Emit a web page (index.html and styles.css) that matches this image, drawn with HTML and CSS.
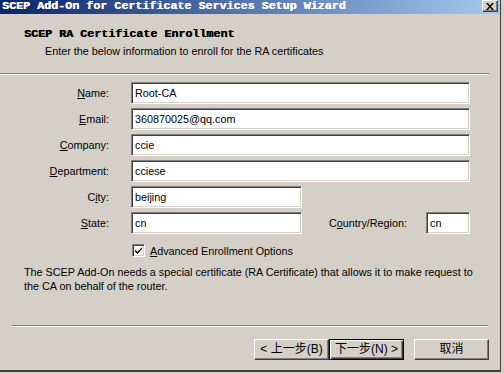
FILE: index.html
```html
<!DOCTYPE html>
<html lang="en">
<head>
  <meta charset="UTF-8" />
  <title>SCEP Add-On for Certificate Services Setup Wizard</title>
  <link rel="stylesheet" href="styles.css">
</head>
<body>
  <div class="window">
    <div class="titlebar">
      <span class="title">SCEP Add-On for Certificate Services Setup Wizard</span>
      <span class="close-btn">
        <svg width="8" height="7" viewBox="0 0 8 7"><path d="M0 0h2l2 2.5 2-2.5h2l-3 3.5 3 3.5h-2l-2-2.5-2 2.5h-2l3-3.5z" fill="#000"/></svg>
      </span>
    </div>

    <div class="header">
      <h1>SCEP RA Certificate Enrollment</h1>
      <p>Enter the below information to enroll for the RA certificates</p>
    </div>
    <div class="sep top-sep"></div>

    <div class="main">
      <div class="form">
        <label class="lbl"><u>N</u>ame:</label>
        <div class="field wide">Root-CA</div>

        <label class="lbl"><u>E</u>mail:</label>
        <div class="field wide">360870025@qq.com</div>

        <label class="lbl"><u>C</u>ompany:</label>
        <div class="field wide">ccie</div>

        <label class="lbl"><u>D</u>epartment:</label>
        <div class="field wide">cciese</div>

        <label class="lbl">C<u>i</u>ty:</label>
        <div class="field">beijing</div>
        <span></span><span></span>

        <label class="lbl"><u>S</u>tate:</label>
        <div class="field">cn</div>
        <label class="lbl lbl-right">C<u>o</u>untry/Region:</label>
        <div class="field">cn</div>

        <span></span>
        <div class="check-row">
          <span class="checkbox">
            <svg width="9" height="9" viewBox="0 0 9 9"><path d="M1 3.5l2.5 2.5 4.5-5v2l-4.5 5-2.5-2.5z" fill="#000"/></svg>
          </span>
          <span><u>A</u>dvanced Enrollment Options</span>
        </div>
      </div>

      <p class="note">The SCEP Add-On needs a special certificate (RA Certificate) that allows it to make request to<br>the CA on behalf of the router.</p>
    </div>

    <div class="sep bottom-sep"></div>
    <div class="buttons">
      <button class="btn">&lt; 上一步(<u>B</u>)</button>
      <button class="btn btn-default">下一步(<u>N</u>) &gt;</button>
      <button class="btn btn-cancel">取消</button>
    </div>
  </div>
</body>
</html>
```

FILE: styles.css
```css
html, body {
  margin: 0;
  padding: 0;
}
body {
  width: 504px;
  height: 374px;
  overflow: hidden;
  background: #d4d0c8;
  font-family: "Liberation Sans", Arial, sans-serif;
  font-size: 10.8px;
  color: #000;
}
.window {
  width: 501px;
  height: 372px;
  border-right: 1px solid #404040;
  border-bottom: 2px solid #404040;
  display: flex;
  flex-direction: column;
  box-sizing: border-box;
}
.titlebar {
  height: 14px;
  display: flex;
  align-items: flex-start;
  justify-content: space-between;
  background: linear-gradient(to right, #0a246a, #a6caf0);
  color: #fff;
}
.title {
  font-family: "Liberation Mono", "Courier New", monospace;
  font-weight: bold;
  font-size: 11.7px;
  line-height: 12px;
  padding-left: 2px;
  text-shadow: 0.4px 0 #fff;
}
.close-btn {
  width: 16px;
  height: 12px;
  margin-right: 2px;
  display: flex;
  align-items: center;
  justify-content: center;
  background: #d4d0c8;
  box-sizing: border-box;
  border: 1px solid;
  border-color: #fff #404040 #404040 #fff;
  box-shadow: inset -1px -1px #808080;
}
.header {
  padding: 14px 0 0 24px;
  height: 59px;
  box-sizing: border-box;
}
.header h1 {
  margin: 0;
  font-family: "Liberation Mono", "Courier New", monospace;
  font-weight: bold;
  font-size: 11.7px;
  line-height: 12px;
  height: 16px;
  text-shadow: 0.4px 0 #000;
}
.header p {
  margin: 0 0 0 21px;
  line-height: 14px;
}
.sep {
  height: 1px;
  background: #808080;
  border-bottom: 1px solid #fff;
}
.top-sep {
  width: 489px;
}
.main {
  flex: 1;
}
.form {
  display: grid;
  grid-template-columns: 131px 171px 124px 44px;
  grid-auto-rows: 22px;
  row-gap: 4px;
  padding-top: 7px;
}
.lbl {
  text-align: right;
  padding-right: 22px;
  line-height: 22px;
}
.lbl-right {
  padding-right: 19px;
}
.field {
  background: #fff;
  box-sizing: border-box;
  border: 1px solid;
  border-color: #808080 #fff #fff #808080;
  box-shadow: inset 1px 1px #404040, inset -1px -1px #d4d0c8;
  padding-left: 3px;
  line-height: 20px;
  white-space: nowrap;
  overflow: hidden;
}
.wide {
  grid-column: span 3;
}
.check-row {
  grid-column: span 3;
  display: flex;
  align-items: center;
  gap: 5px;
  padding-left: 1px;
  margin-top: 3px;
}
.checkbox {
  width: 13px;
  height: 13px;
  box-sizing: border-box;
  background: #fff;
  border: 1px solid;
  border-color: #808080 #fff #fff #808080;
  box-shadow: inset 1px 1px #404040, inset -1px -1px #d4d0c8;
  display: flex;
  align-items: center;
  justify-content: center;
}
.note {
  margin: 5px 0 0 24px;
  line-height: 14px;
  white-space: nowrap;
}
.bottom-sep {
  margin-left: 12px;
  width: 476px;
}
.buttons {
  display: flex;
  padding: 12px 0 10px 254px;
}
.btn {
  width: 75px;
  height: 21px;
  padding: 0;
  font-family: "Liberation Sans", "Noto Sans CJK SC", sans-serif;
  font-size: 12px;
  line-height: 17px;
  color: #000;
  background: #d4d0c8;
  box-sizing: border-box;
  border: 1px solid;
  border-color: #fff #404040 #404040 #fff;
  box-shadow: inset -1px -1px #808080;
}
.btn u {
  text-decoration: none;
}
.btn-default {
  border: 1px solid #000;
  box-shadow: inset 1px 1px #fff, inset -1px -1px #404040, inset -2px -2px #808080;
}
.btn-cancel {
  margin-left: 10px;
}
```
